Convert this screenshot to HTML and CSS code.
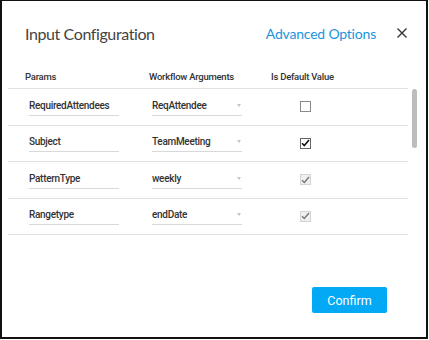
FILE: index.html
```html
<!DOCTYPE html>
<html>
<head>
<meta charset="utf-8">
<link rel="stylesheet" href="styles.css">
</head>
<body>
<div class="dialog">
  <div class="head">
    <div class="title">Input Configuration</div>
    <a class="adv">Advanced Options</a>
    <svg class="close" width="10" height="10" viewBox="0 0 10 10"><path d="M0.5 0.5L9.5 9.5M9.5 0.5L0.5 9.5" stroke="#333" stroke-width="1.4" fill="none"/></svg>
  </div>
  <div class="table">
    <div class="thead">
      <div class="th th1">Params</div>
      <div class="th">Workflow Arguments</div>
      <div class="th">Is Default Value</div>
    </div>
    <div class="body">
      <div class="rows">
        <div class="row">
          <div class="c1"><div class="field">RequiredAttendees</div></div>
          <div class="c2"><div class="field select">ReqAttendee<span class="caret"></span></div></div>
          <div class="c3"><span class="cb"></span></div>
        </div>
        <div class="row">
          <div class="c1"><div class="field">Subject</div></div>
          <div class="c2"><div class="field select">TeamMeeting<span class="caret"></span></div></div>
          <div class="c3"><span class="cb on"><svg width="9" height="8" viewBox="0 0 9 8"><path d="M1 4.2L3.3 6.5L8 1" stroke="#111" stroke-width="1.6" fill="none"/></svg></span></div>
        </div>
        <div class="row">
          <div class="c1"><div class="field">PatternType</div></div>
          <div class="c2"><div class="field select">weekly<span class="caret"></span></div></div>
          <div class="c3"><span class="cb dis"><svg width="9" height="8" viewBox="0 0 9 8"><path d="M1 4.2L3.3 6.5L8 1" stroke="#777" stroke-width="1.4" fill="none"/></svg></span></div>
        </div>
        <div class="row">
          <div class="c1"><div class="field">Rangetype</div></div>
          <div class="c2"><div class="field select">endDate<span class="caret"></span></div></div>
          <div class="c3"><span class="cb dis"><svg width="9" height="8" viewBox="0 0 9 8"><path d="M1 4.2L3.3 6.5L8 1" stroke="#777" stroke-width="1.4" fill="none"/></svg></span></div>
        </div>
      </div>
      <div class="track"><div class="thumb"></div></div>
    </div>
  </div>
  <div class="foot">
    <button class="confirm">Confirm</button>
  </div>
</div>
</body>
</html>
```

FILE: styles.css
```css
html, body {
  margin: 0;
  padding: 0;
  background: #fff;
}
.dialog {
  box-sizing: border-box;
  width: 428px;
  height: 339px;
  border: 2px solid #111;
  border-top-width: 1px;
  display: flex;
  flex-direction: column;
  font-family: Roboto, "Liberation Sans", sans-serif;
  color: #333;
}
.head {
  height: 64px;
  display: flex;
  align-items: center;
  padding: 0 19px 0 23px;
}
.title {
  font-family: Lato, sans-serif;
  font-size: 16px;
  letter-spacing: -0.4px;
  color: #444;
  flex: 1;
}
.adv {
  font-family: Lato, sans-serif;
  font-size: 14px;
  letter-spacing: -0.2px;
  color: #1c94dc;
  margin-right: 21px;
}
.close {
  display: block;
}
.table {
  margin-left: 6px;
}
.thead {
  width: 400px;
  height: 24px;
  box-sizing: border-box;
  border-bottom: 1px solid #e2e2e2;
  display: grid;
  grid-template-columns: 141px 122px 1fr;
  align-items: center;
  font-size: 9.5px;
  letter-spacing: -0.25px;
  font-weight: 500;
  color: #333;
}
.th1 {
  padding-left: 17px;
}
.body {
  display: flex;
}
.rows {
  width: 400px;
}
.row {
  height: 36.5px;
  box-sizing: border-box;
  border-bottom: 1px solid #e2e2e2;
  display: grid;
  grid-template-columns: 141px 122px 1fr;
  align-items: center;
  font-size: 10px;
  letter-spacing: -0.3px;
  font-weight: 500;
  color: #333;
}
.c1 {
  padding-left: 21px;
}
.c2 {
  padding-left: 3px;
}
.c3 {
  padding-left: 29px;
  display: flex;
}
.field {
  width: 90px;
  height: 18px;
  box-sizing: border-box;
  border-bottom: 1px solid #d9d9d9;
  line-height: 15px;
  position: relative;
}
.caret {
  position: absolute;
  right: 1px;
  top: 6px;
  width: 0;
  height: 0;
  border-left: 2.5px solid transparent;
  border-right: 2.5px solid transparent;
  border-top: 3px solid #c4c4c4;
}
.cb {
  width: 11px;
  height: 11px;
  box-sizing: border-box;
  border: 1px solid #8a8a8a;
  background: #fff;
  display: flex;
  align-items: center;
  justify-content: center;
}
.cb.on {
  border-color: #666;
}
.cb.dis {
  border-color: #d4d4d4;
  background: #efefef;
}
.track {
  margin-left: 4px;
  width: 5px;
}
.thumb {
  width: 5px;
  height: 59px;
  border-radius: 3px;
  background: #bdbdbd;
}
.foot {
  margin-top: auto;
  display: flex;
  justify-content: flex-end;
  padding: 0 39px 24px 0;
}
.confirm {
  width: 75px;
  height: 26px;
  border: none;
  border-radius: 2px;
  background: #03a9f4;
  color: #fff;
  font-family: Roboto, sans-serif;
  font-size: 12.5px;
  padding: 0;
}
```
